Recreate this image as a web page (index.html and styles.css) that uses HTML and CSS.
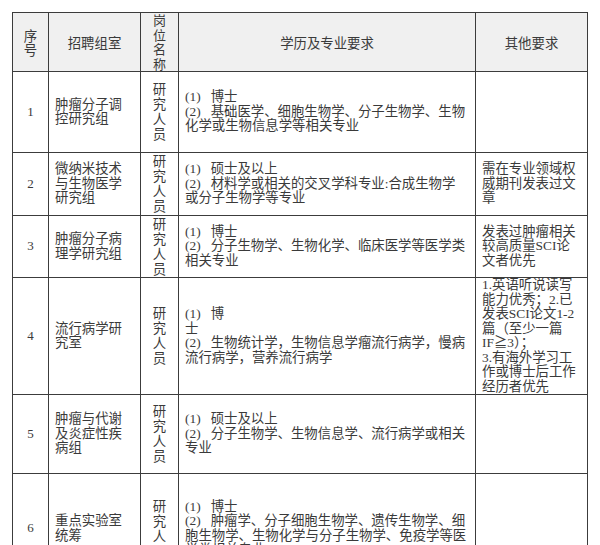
FILE: index.html
```html
<!DOCTYPE html>
<html lang="zh-CN">
<head>
<meta charset="utf-8">
<title>招聘岗位</title>
<link rel="stylesheet" href="styles.css">
</head>
<body>
<table class="jobs">
  <colgroup>
    <col class="c-no">
    <col class="c-group">
    <col class="c-pos">
    <col class="c-edu">
    <col class="c-other">
  </colgroup>
  <thead>
    <tr class="r-head">
      <th class="num">序<br>号</th>
      <th>招聘组室</th>
      <th class="pos">岗<br>位<br>名<br>称</th>
      <th>学历及专业要求</th>
      <th>其他要求</th>
    </tr>
  </thead>
  <tbody>
    <tr class="r1">
      <td class="num">1</td>
      <td class="grp">肿瘤分子调<br>控研究组</td>
      <td class="pos">研<br>究<br>人<br>员</td>
      <td class="edu">(1)<span class="sp"></span>博士<br>(2)<span class="sp"></span>基础医学、细胞生物学、分子生物学、生物<br>化学或生物信息学等相关专业</td>
      <td class="oth"></td>
    </tr>
    <tr class="r2">
      <td class="num">2</td>
      <td class="grp">微纳米技术<br>与生物医学<br>研究组</td>
      <td class="pos">研<br>究<br>人<br>员</td>
      <td class="edu">(1)<span class="sp"></span>硕士及以上<br>(2)<span class="sp"></span>材料学或相关的交叉学科专业:合成生物学<br>或分子生物学等专业</td>
      <td class="oth">需在专业领域权<br>威期刊发表过文<br>章</td>
    </tr>
    <tr class="r3">
      <td class="num">3</td>
      <td class="grp">肿瘤分子病<br>理学研究组</td>
      <td class="pos">研<br>究<br>人<br>员</td>
      <td class="edu">(1)<span class="sp"></span>博士<br>(2)<span class="sp"></span>分子生物学、生物化学、临床医学等医学类<br>相关专业</td>
      <td class="oth">发表过肿瘤相关<br>较高质量SCI论<br>文者优先</td>
    </tr>
    <tr class="r4">
      <td class="num">4</td>
      <td class="grp">流行病学研<br>究室</td>
      <td class="pos">研<br>究<br>人<br>员</td>
      <td class="edu">(1)<span class="sp"></span>博<br>士<br>(2)<span class="sp"></span>生物统计学，生物信息学瘤流行病学，慢病<br>流行病学，营养流行病学</td>
      <td class="oth">1.英语听说读写<br>能力优秀；2.已<br>发表SCI论文1-2<br>篇（至少一篇<br>IF≧3）；<br>3.有海外学习工<br>作或博士后工作<br>经历者优先</td>
    </tr>
    <tr class="r5">
      <td class="num">5</td>
      <td class="grp">肿瘤与代谢<br>及炎症性疾<br>病组</td>
      <td class="pos">研<br>究<br>人<br>员</td>
      <td class="edu">(1)<span class="sp"></span>硕士及以上<br>(2)<span class="sp"></span>分子生物学、生物信息学、流行病学或相关<br>专业</td>
      <td class="oth"></td>
    </tr>
    <tr class="r6">
      <td class="num">6</td>
      <td class="grp">重点实验室<br>统筹</td>
      <td class="pos">研<br>究<br>人<br>员</td>
      <td class="edu">(1)<span class="sp"></span>博士<br>(2)<span class="sp"></span>肿瘤学、分子细胞生物学、遗传生物学、细<br>胞生物学、生物化学与分子生物学、免疫学等医<br>学类相关专业</td>
      <td class="oth"></td>
    </tr>
  </tbody>
</table>
</body>
</html>
```

FILE: styles.css
```css
html, body {
  margin: 0;
  background: #ffffff;
}
body {
  padding: 12px 0 0 12px;
  font-family: "Liberation Serif", "Noto Sans CJK SC", serif;
  font-size: 13.4px;
  color: #3a3a3a;
}
.jobs {
  border-collapse: collapse;
  table-layout: fixed;
  width: 575px;
  border: 1px solid #666;
}
.c-no { width: 36px; }
.c-group { width: 92px; }
.c-pos { width: 38px; }
.c-edu { width: 297px; }
.c-other { width: 112px; }

.jobs th,
.jobs td {
  border: 1px solid #3c3c3c;
  padding: 0 6px;
  line-height: 14.5px;
  vertical-align: middle;
  white-space: nowrap;
}
.jobs th {
  background: #f0f0f0;
  font-weight: normal;
  text-align: center;
  font-family: "Noto Sans CJK SC", sans-serif;
  color: #3a3a3a;
}
.jobs th.pos {
  padding: 0;
  font-size: 13px;
  line-height: 14.5px;
  vertical-align: middle;
}
.r-head { height: 58px; }
.r1 { height: 81px; }
.r2 { height: 63px; }
.r3 { height: 62px; }
.r4 { height: 116px; }
.r5 { height: 79px; }
.r6 { height: 110px; }

.num {
  text-align: center;
  padding: 0;
}
td.num {
  font-size: 13px;
}
.grp {
  padding-left: 7px;
  line-height: 14px;
}
td.pos {
  text-align: center;
  padding: 0;
  line-height: 15px;
}
.edu {
  padding-left: 6px;
  line-height: 14px;
}
.sp {
  display: inline-block;
  width: 10px;
}
.oth {
  padding-left: 7px;
  line-height: 14.5px;
}
```
